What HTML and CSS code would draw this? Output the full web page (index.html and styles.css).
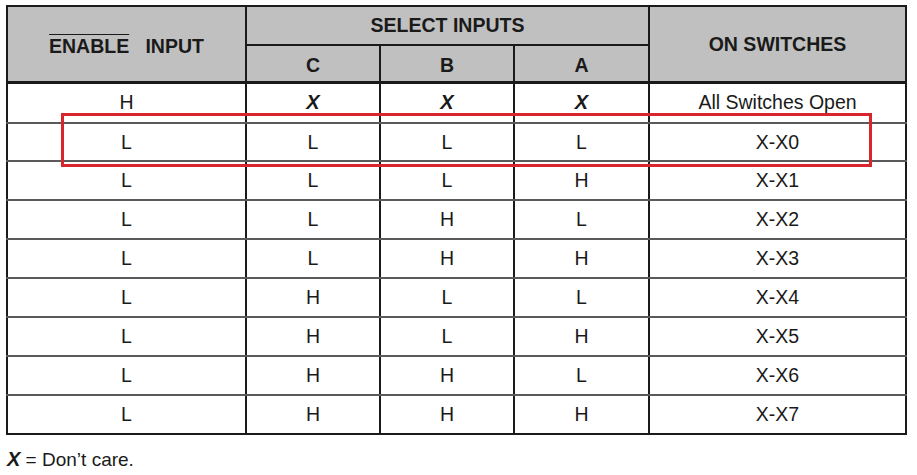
FILE: index.html
```html
<!DOCTYPE html>
<html>
<head>
<meta charset="utf-8">
<link rel="stylesheet" href="styles.css">
</head>
<body>
<div class="wrap">
<table class="truth">
  <colgroup>
    <col class="c1"><col class="c2"><col class="c3"><col class="c4"><col class="c5">
  </colgroup>
  <thead>
    <tr class="h1">
      <th rowspan="2" class="en"><span class="ovl">ENABLE</span>&nbsp;&nbsp; INPUT</th>
      <th colspan="3">SELECT INPUTS</th>
      <th rowspan="2">ON SWITCHES</th>
    </tr>
    <tr class="h2">
      <th>C</th><th>B</th><th>A</th>
    </tr>
  </thead>
  <tbody>
    <tr><td>H</td><td class="x">X</td><td class="x">X</td><td class="x">X</td><td>All Switches Open</td></tr>
    <tr><td>L</td><td>L</td><td>L</td><td>L</td><td>X-X0</td></tr>
    <tr><td>L</td><td>L</td><td>L</td><td>H</td><td>X-X1</td></tr>
    <tr><td>L</td><td>L</td><td>H</td><td>L</td><td>X-X2</td></tr>
    <tr><td>L</td><td>L</td><td>H</td><td>H</td><td>X-X3</td></tr>
    <tr><td>L</td><td>H</td><td>L</td><td>L</td><td>X-X4</td></tr>
    <tr><td>L</td><td>H</td><td>L</td><td>H</td><td>X-X5</td></tr>
    <tr><td>L</td><td>H</td><td>H</td><td>L</td><td>X-X6</td></tr>
    <tr><td>L</td><td>H</td><td>H</td><td>H</td><td>X-X7</td></tr>
  </tbody>
</table>
<div class="highlight"></div>
<p class="note"><b><i>X</i></b> = Don’t care.</p>
</div>
</body>
</html>
```

FILE: styles.css
```css
html, body {
  margin: 0;
  padding: 0;
  background: #ffffff;
}
body {
  font-family: "Liberation Sans", Arial, sans-serif;
  color: #1a1a1a;
}
.wrap {
  position: relative;
  padding: 5px 0 0 6px;
}
.truth {
  border-collapse: collapse;
  table-layout: fixed;
  width: 901px;
  border: 2px solid #1a1a1a;
}
.c1 { width: 239px; }
.c2 { width: 134px; }
.c3 { width: 134px; }
.c4 { width: 135px; }
.c5 { width: 257px; }
.truth th {
  background: #c0c0c0;
  font-weight: bold;
  font-size: 19.5px;
  color: #1a1a1a;
  text-align: center;
  border: 2px solid #1a1a1a;
  padding: 0;
  height: 35px;
  line-height: 22px;
}
.truth thead tr.h1 th {
  border-bottom: 3px solid #1a1a1a;
}
.truth thead tr.h1 th[colspan] {
  border-bottom: 2px solid #1a1a1a;
  padding-bottom: 2px;
}
.truth thead tr.h1 th.en {
  padding-top: 4px;
}
.truth thead tr.h2 th {
  height: 33px;
  border-bottom: 3px solid #1a1a1a;
  padding-top: 2px;
}
.ovl {
  text-decoration: overline;
}
.truth td {
  border-left: 2px solid #1a1a1a;
  border-right: 2px solid #1a1a1a;
  border-top: 2px solid #5a5a5a;
  border-bottom: 2px solid #5a5a5a;
  text-align: center;
  font-size: 19.5px;
  height: 36.9px;
  padding: 0;
  color: #1a1a1a;
}
.truth tbody tr:first-child td {
  height: 37.6px;
}
.truth tbody tr:last-child td {
  border-bottom: 2px solid #1a1a1a;
}
.truth td.x {
  font-weight: bold;
  font-style: italic;
  font-size: 20px;
}
.highlight {
  position: absolute;
  left: 61px;
  top: 113px;
  width: 805px;
  height: 48px;
  border: 3px solid #d9252d;
}
.note {
  margin: 13px 0 0 1px;
  font-size: 19px;
  color: #1a1a1a;
}
.note b {
  font-size: 20px;
}
```
